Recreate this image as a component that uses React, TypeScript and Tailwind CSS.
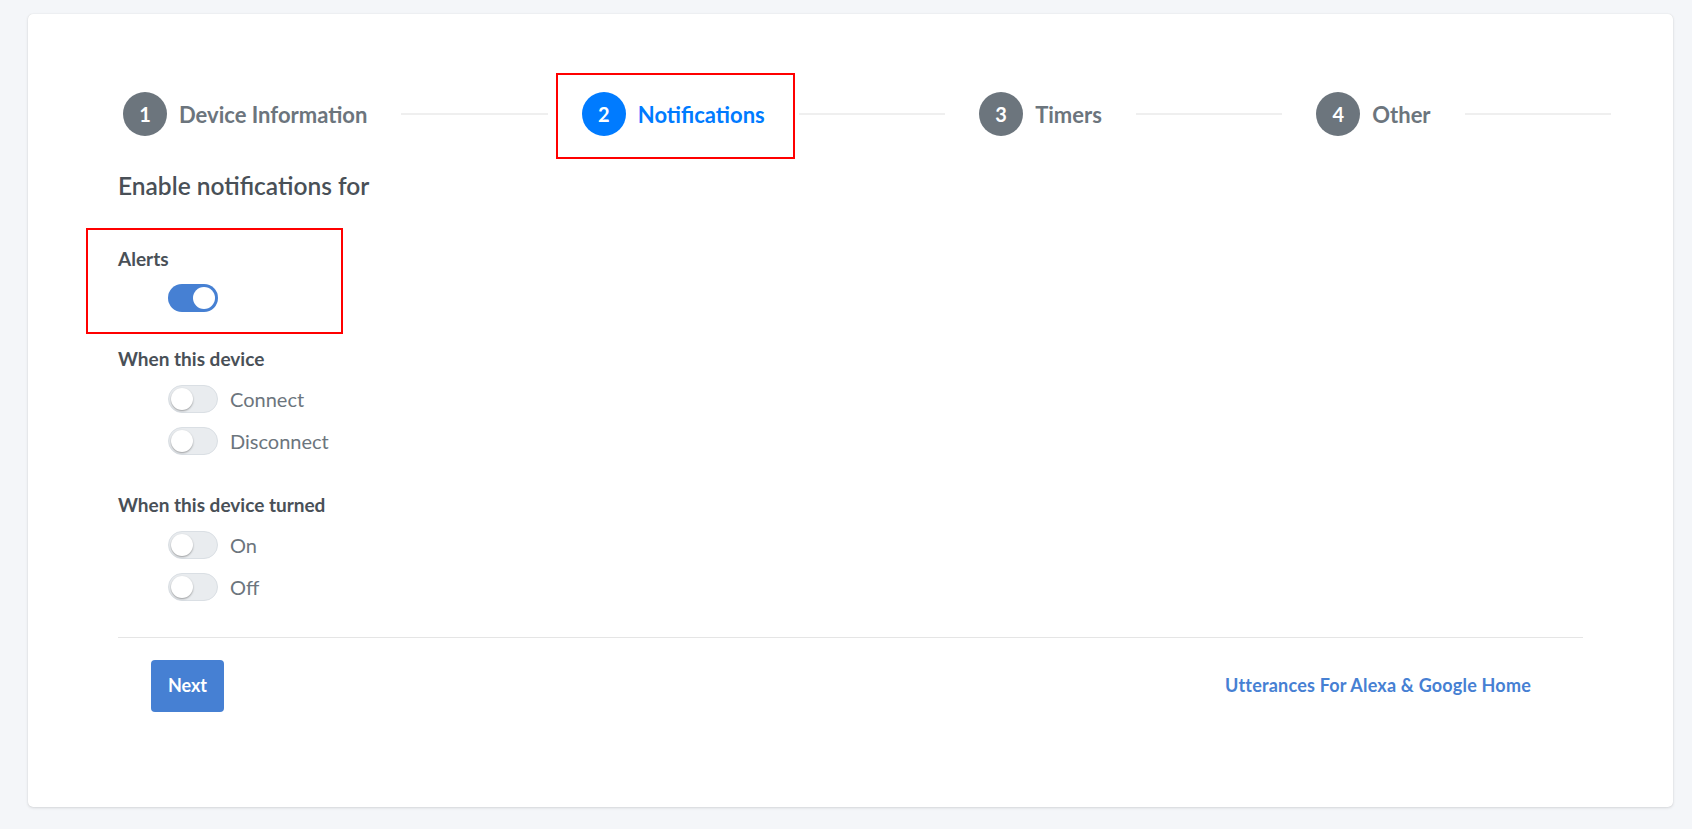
import React from 'react';

const steps = [
  { n: 1, label: 'Device Information' },
  { n: 2, label: 'Notifications', active: true },
  { n: 3, label: 'Timers' },
  { n: 4, label: 'Other' },
];

const Toggle: React.FC<{ on?: boolean }> = ({ on }) =>
  on ? (
    <span className="relative flex h-[28px] w-[50px] shrink-0 items-center rounded-full bg-[#4680d3]">
      <span className="absolute right-[3px] h-[22px] w-[22px] rounded-full bg-white" />
    </span>
  ) : (
    <span className="relative flex h-[28px] w-[50px] shrink-0 items-center rounded-full border border-[#dadfe4] bg-[#e9ecef]">
      <span className="absolute left-[2px] h-[22px] w-[22px] rounded-full bg-white shadow-[0_1px_2px_rgba(0,0,0,0.35)]" />
    </span>
  );

const SwitchRow: React.FC<{ label: string }> = ({ label }) => (
  <div className="ml-[50px] flex h-[28px] items-center gap-[12px]">
    <Toggle />
    <span className="text-[20px] leading-[28px] text-[#6c757d]">{label}</span>
  </div>
);

export default function App() {
  return (
    <div className="min-h-screen bg-[#f4f6f9] pb-[22px] pl-[28px] pr-[19px] pt-[14px] font-['Lato',sans-serif]">
      <div className="h-[793px] rounded-[5px] bg-white px-[90px] pt-[78px] shadow-[0_0_1px_rgba(0,0,0,0.13),0_1px_3px_rgba(0,0,0,0.12)]">
        {/* stepper */}
        <div className="-ml-[15px] -mr-[42px] flex h-[44px] items-center">
          {steps.map((s) => (
            <React.Fragment key={s.n}>
              <div className="relative flex items-center gap-[12px] px-[20px]">
                {s.active && (
                  <span className="absolute -bottom-[23px] -left-[6px] -right-[10px] -top-[19px] border-2 border-[#ff0000]" />
                )}
                <span
                  className={`flex h-[44px] w-[44px] items-center justify-center rounded-full text-[20px] font-bold text-white ${
                    s.active ? 'bg-[#007bff]' : 'bg-[#6c757d]'
                  }`}
                >
                  {s.n}
                </span>
                <span className={`text-[22px] font-bold ${s.active ? 'text-[#007bff]' : 'text-[#6c757d]'}`}>
                  {s.label}
                </span>
              </div>
              <div className="mx-[14px] h-[2px] flex-1 bg-[#efefef]" />
            </React.Fragment>
          ))}
        </div>

        <h3 className="mt-[35px] text-[24.5px] font-semibold leading-[1.2] text-[#495057]">Enable notifications for</h3>

        <div className="relative mt-[48px]">
          <span className="absolute -bottom-[22px] -left-[32px] -top-[20px] w-[257px] border-2 border-[#ff0000]" />
          <p className="text-[19px] font-bold leading-[1.2] text-[#495057]">Alerts</p>
          <div className="ml-[50px] mt-[13px]">
            <Toggle on />
          </div>
        </div>

        <p className="mt-[36px] text-[19px] font-bold leading-[1.2] text-[#495057]">When this device</p>
        <div className="mt-[14px] flex flex-col gap-[14px]">
          <SwitchRow label="Connect" />
          <SwitchRow label="Disconnect" />
        </div>

        <p className="mt-[39px] text-[19px] font-bold leading-[1.2] text-[#495057]">When this device turned</p>
        <div className="mt-[14px] flex flex-col gap-[14px]">
          <SwitchRow label="On" />
          <SwitchRow label="Off" />
        </div>

        <div className="mt-[36px] border-t border-[#e5e5e5]" />
        <div className="mt-[22px] flex items-center justify-between pl-[33px] pr-[52px]">
          <button className="h-[52px] w-[73px] rounded-[4px] bg-[#4680d3] text-[18px] font-bold text-white">Next</button>
          <a className="text-[18px] font-bold tracking-[0.2px] text-[#4680d3]">Utterances For Alexa &amp; Google Home</a>
        </div>
      </div>
    </div>
  );
}
